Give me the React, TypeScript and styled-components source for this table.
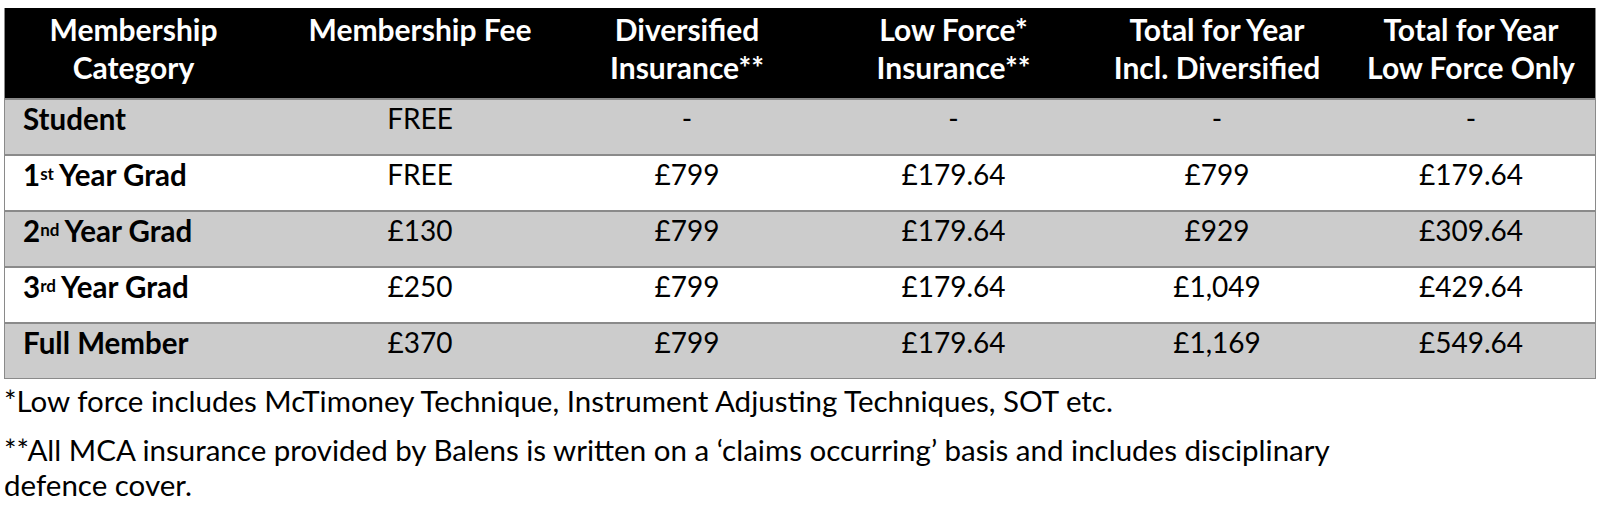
import React from 'react';
import styled, { createGlobalStyle } from 'styled-components';

const GlobalStyle = createGlobalStyle`
  html, body {
    margin: 0;
    padding: 0;
    background: #ffffff;
  }
  body {
    font-family: Lato, "Open Sans", sans-serif;
    color: #000000;
  }
`;

const COLUMNS = '281px 268px 266px 267px 260px 1fr';

const Page = styled.div`
  padding: 8px 4px 0 4px;
`;

const Table = styled.div`
  border: 1.5px solid #8a8a8a;
  border-top: none;
`;

const HeaderRow = styled.div`
  display: grid;
  grid-template-columns: ${COLUMNS};
  height: 90px;
  background: #000000;
  color: #ffffff;
  font-weight: 700;
  font-size: 30px;
  line-height: 38px;
`;

const HeaderCell = styled.div<{ $shift?: number }>`
  display: flex;
  align-items: flex-start;
  justify-content: center;
  text-align: center;
  padding-top: 2px;
  padding-right: ${(p) => p.$shift ?? 0}px;
`;

const Row = styled.div<{ $shaded: boolean }>`
  display: grid;
  grid-template-columns: ${COLUMNS};
  height: 56px;
  background: ${(p) => (p.$shaded ? '#cccccc' : '#ffffff')};
  border-top: 2px solid #8a8a8a;
  box-sizing: border-box;
  font-size: 28px;
`;

const NameCell = styled.div`
  display: flex;
  align-items: center;
  padding: 0 0 18px 18px;
  font-weight: 700;
  font-size: 29.5px;
`;

const Cell = styled.div`
  display: flex;
  align-items: center;
  justify-content: center;
  padding-bottom: 18px;
`;

const Sup = styled.sup`
  font-size: 17px;
  line-height: 0;
  vertical-align: 13px;
  margin-right: 5px;
`;

const Notes = styled.div`
  font-size: 29.5px;
  line-height: 35px;
  padding-top: 4px;
`;

const Note = styled.p`
  margin: 0 0 14px 0;
`;

const HEADERS = [
  ['Membership', 'Category'],
  ['Membership Fee'],
  ['Diversified', 'Insurance**'],
  ['Low Force*', 'Insurance**'],
  ['Total for Year', 'Incl. Diversified'],
  ['Total for Year', 'Low Force Only'],
];

type Member = {
  num?: string;
  sup?: string;
  name: string;
  values: string[];
};

const MEMBERS: Member[] = [
  { name: 'Student', values: ['FREE', '-', '-', '-', '-'] },
  {
    num: '1',
    sup: 'st',
    name: 'Year Grad',
    values: ['FREE', '£799', '£179.64', '£799', '£179.64'],
  },
  {
    num: '2',
    sup: 'nd',
    name: 'Year Grad',
    values: ['£130', '£799', '£179.64', '£929', '£309.64'],
  },
  {
    num: '3',
    sup: 'rd',
    name: 'Year Grad',
    values: ['£250', '£799', '£179.64', '£1,049', '£429.64'],
  },
  {
    name: 'Full Member',
    values: ['£370', '£799', '£179.64', '£1,169', '£549.64'],
  },
];

const App = () => (
  <>
    <GlobalStyle />
    <Page>
      <Table>
        <HeaderRow>
          {HEADERS.map((lines, i) => (
            <HeaderCell key={i} $shift={i === 0 ? 24 : 0}>
              <div>
                {lines.map((line) => (
                  <div key={line}>{line}</div>
                ))}
              </div>
            </HeaderCell>
          ))}
        </HeaderRow>
        {MEMBERS.map((m, i) => (
          <Row key={i} $shaded={i % 2 === 0}>
            <NameCell>
              {m.num && (
                <>
                  {m.num}
                  <Sup>{m.sup}</Sup>
                </>
              )}
              {m.name}
            </NameCell>
            {m.values.map((v, j) => (
              <Cell key={j}>{v}</Cell>
            ))}
          </Row>
        ))}
      </Table>
      <Notes>
        <Note>
          *Low force includes McTimoney Technique, Instrument Adjusting
          Techniques, SOT etc.
        </Note>
        <Note>
          **All MCA insurance provided by Balens is written on a ‘claims
          occurring’ basis and includes disciplinary
          <br />
          defence cover.
        </Note>
      </Notes>
    </Page>
  </>
);

export default App;
